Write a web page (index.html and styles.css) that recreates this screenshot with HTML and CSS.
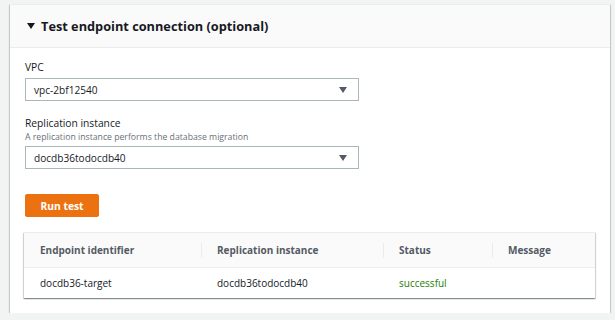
FILE: index.html
```html
<!DOCTYPE html>
<html>
<head>
<meta charset="utf-8">
<link rel="stylesheet" href="styles.css">
</head>
<body>
<div class="card">
  <div class="card-header">
    <span class="caret"></span>
    <h2 class="title">Test endpoint connection (optional)</h2>
  </div>
  <div class="card-body">
    <div class="field">
      <div class="label">VPC</div>
      <div class="select"><span>vpc-2bf12540</span><span class="arrow"></span></div>
    </div>
    <div class="field field-2">
      <div class="label">Replication instance</div>
      <div class="desc">A replication instance performs the database migration</div>
      <div class="select"><span>docdb36todocdb40</span><span class="arrow"></span></div>
    </div>
    <button class="btn">Run test</button>
    <div class="table">
      <div class="row head">
        <div class="cell c1">Endpoint identifier</div>
        <div class="cell c2">Replication instance</div>
        <div class="cell c3">Status</div>
        <div class="cell c4">Message</div>
      </div>
      <div class="row body">
        <div class="cell c1">docdb36-target</div>
        <div class="cell c2">docdb36todocdb40</div>
        <div class="cell c3 ok">successful</div>
        <div class="cell c4"></div>
      </div>
    </div>
  </div>
</div>
</body>
</html>
```

FILE: styles.css
```css
* { box-sizing: border-box; }
body {
  margin: 0;
  background: #f2f3f3;
  font-family: "Open Sans", "Noto Sans", sans-serif;
  color: #16191f;
}
.card {
  margin: 4px 5px 0 10px;
  width: 600px;
  background: #fff;
  border-top: 1px solid #eaeded;
  box-shadow: 0 1px 1px 0 rgba(0,28,36,.3), 1px 1px 1px 0 rgba(0,28,36,.15), -1px 1px 1px 0 rgba(0,28,36,.15);
}
.card-header {
  height: 43px;
  background: #fafafa;
  border-bottom: 1px solid #eaeded;
  display: flex;
  align-items: center;
  padding-left: 17px;
}
.caret {
  width: 0; height: 0;
  border-left: 4px solid transparent;
  border-right: 4px solid transparent;
  border-top: 6px solid #16191f;
  margin-right: 6px;
}
.title {
  margin: 0;
  font-size: 12.75px;
  font-weight: 700;
  color: #16191f;
}
.card-body {
  padding: 11px 15px 15px 14px;
}
.field { margin-left: 1px; }
.label {
  font-size: 10.25px;
  line-height: 16px;
  color: #16191f;
  margin-bottom: 3px;
}
.field-2 { margin-top: 14px; }
.field-2 .label { margin-bottom: 0; }
.desc {
  font-size: 8.7px;
  line-height: 12px;
  color: #687078;
  margin-bottom: 3px;
}
.select {
  width: 334px;
  height: 23px;
  border: 1px solid #aab7b8;
  display: flex;
  align-items: center;
  justify-content: space-between;
  padding: 0 11px 0 8px;
  font-size: 10.1px;
}
.arrow {
  width: 0; height: 0;
  border-left: 4px solid transparent;
  border-right: 4px solid transparent;
  border-top: 6px solid #545b64;
}
.btn {
  display: block;
  margin: 25px 0 15px 1px;
  width: 74px;
  height: 23px;
  background: #ec7211;
  border: 1px solid #ec7211;
  border-radius: 2px;
  color: #fff;
  font-family: inherit;
  font-weight: 700;
  font-size: 10.3px;
  padding: 0;
}
.table {
  width: 571px;
  border-top: 1px solid #eaeded;
  box-shadow: 0 1px 1px 0 rgba(0,28,36,.3), 1px 1px 1px 0 rgba(0,28,36,.15), -1px 1px 1px 0 rgba(0,28,36,.15);
}
.row { display: flex; }
.row.head {
  height: 35px;
  background: #fafafa;
  border-bottom: 1px solid #eaeded;
  font-weight: 700;
  color: #545b64;
}
.row.body { height: 30px; }
.cell {
  display: flex;
  align-items: center;
  font-size: 10px;
  padding-left: 16px;
  position: relative;
}
.c1 { width: 177px; }
.c2 { width: 182px; }
.c3 { width: 109px; }
.c4 { flex: 1; }
.head .c2::before, .head .c3::before, .head .c4::before {
  content: "";
  position: absolute;
  left: 0; top: 10px; bottom: 9px;
  border-left: 1px solid #eaeded;
}
.ok { color: #1d8102; }
```
